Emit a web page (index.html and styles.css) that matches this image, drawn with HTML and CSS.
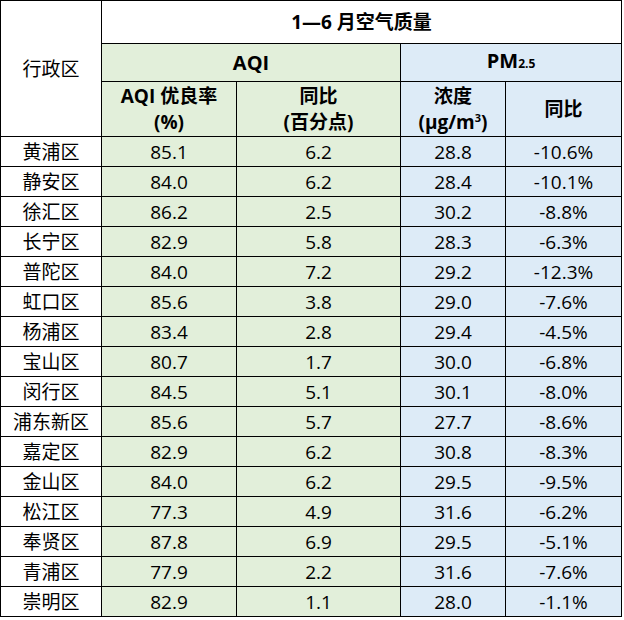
FILE: index.html
```html
<!DOCTYPE html>
<html lang="zh">
<head>
<meta charset="utf-8">
<link rel="stylesheet" href="styles.css">
</head>
<body>
<table class="tbl">
  <colgroup>
    <col class="c1"><col class="c2"><col class="c3"><col class="c4"><col class="c5">
  </colgroup>
  <thead>
    <tr class="r-title">
      <th class="region" rowspan="3">行政区</th>
      <th class="title" colspan="4">1—6 月空气质量</th>
    </tr>
    <tr class="r-group">
      <th class="g grp" colspan="2">AQI</th>
      <th class="b grp" colspan="2">PM<span class="sub">2.5</span></th>
    </tr>
    <tr class="r-sub">
      <th class="g"><span class="ln">AQI 优良率</span><span class="ln">(%)</span></th>
      <th class="g"><span class="ln">同比</span><span class="ln">(百分点)</span></th>
      <th class="b"><span class="ln">浓度</span><span class="ln">(µg/m<sup>3</sup>)</span></th>
      <th class="b">同比</th>
    </tr>
  </thead>
  <tbody>
    <tr><td class="name">黄浦区</td><td class="g">85.1</td><td class="g">6.2</td><td class="b">28.8</td><td class="b">-10.6%</td></tr>
    <tr><td class="name">静安区</td><td class="g">84.0</td><td class="g">6.2</td><td class="b">28.4</td><td class="b">-10.1%</td></tr>
    <tr><td class="name">徐汇区</td><td class="g">86.2</td><td class="g">2.5</td><td class="b">30.2</td><td class="b">-8.8%</td></tr>
    <tr><td class="name">长宁区</td><td class="g">82.9</td><td class="g">5.8</td><td class="b">28.3</td><td class="b">-6.3%</td></tr>
    <tr><td class="name">普陀区</td><td class="g">84.0</td><td class="g">7.2</td><td class="b">29.2</td><td class="b">-12.3%</td></tr>
    <tr><td class="name">虹口区</td><td class="g">85.6</td><td class="g">3.8</td><td class="b">29.0</td><td class="b">-7.6%</td></tr>
    <tr><td class="name">杨浦区</td><td class="g">83.4</td><td class="g">2.8</td><td class="b">29.4</td><td class="b">-4.5%</td></tr>
    <tr><td class="name">宝山区</td><td class="g">80.7</td><td class="g">1.7</td><td class="b">30.0</td><td class="b">-6.8%</td></tr>
    <tr><td class="name">闵行区</td><td class="g">84.5</td><td class="g">5.1</td><td class="b">30.1</td><td class="b">-8.0%</td></tr>
    <tr><td class="name">浦东新区</td><td class="g">85.6</td><td class="g">5.7</td><td class="b">27.7</td><td class="b">-8.6%</td></tr>
    <tr><td class="name">嘉定区</td><td class="g">82.9</td><td class="g">6.2</td><td class="b">30.8</td><td class="b">-8.3%</td></tr>
    <tr><td class="name">金山区</td><td class="g">84.0</td><td class="g">6.2</td><td class="b">29.5</td><td class="b">-9.5%</td></tr>
    <tr><td class="name">松江区</td><td class="g">77.3</td><td class="g">4.9</td><td class="b">31.6</td><td class="b">-6.2%</td></tr>
    <tr><td class="name">奉贤区</td><td class="g">87.8</td><td class="g">6.9</td><td class="b">29.5</td><td class="b">-5.1%</td></tr>
    <tr><td class="name">青浦区</td><td class="g">77.9</td><td class="g">2.2</td><td class="b">31.6</td><td class="b">-7.6%</td></tr>
    <tr><td class="name">崇明区</td><td class="g">82.9</td><td class="g">1.1</td><td class="b">28.0</td><td class="b">-1.1%</td></tr>
  </tbody>
</table>
</body>
</html>
```

FILE: styles.css
```css
html, body {
  margin: 0;
  padding: 0;
  background: #ffffff;
}
body {
  font-family: "Open Sans", "Noto Sans CJK SC", sans-serif;
  color: #000000;
}
.tbl {
  border-collapse: collapse;
  table-layout: fixed;
  width: 621px;
  font-size: 19px;
}
.c1 { width: 101px; }
.c2 { width: 135px; }
.c3 { width: 164px; }
.c4 { width: 105px; }
.c5 { width: 116px; }
.tbl th, .tbl td {
  border: 1px solid #000000;
  padding: 0;
  text-align: center;
  vertical-align: middle;
  line-height: 22px;
}
.tbl th {
  font-weight: 700;
}
.tbl th.region {
  font-weight: 400;
  background: #ffffff;
}
.ln {
  display: block;
  line-height: 26px;
}
.r-title { height: 43px; }
.r-group { height: 38px; }
.r-sub { height: 55px; }
.tbl tbody tr { height: 30px; }
.title { background: #ffffff; }
.grp { font-size: 20px; }
.g { background: #e2efda; }
.b { background: #ddebf7; }
.sub {
  font-size: 12px;
}
sup {
  font-size: 11px;
  line-height: 0;
  vertical-align: 7px;
}
.tbl td.name {
  background: #ffffff;
}
```
